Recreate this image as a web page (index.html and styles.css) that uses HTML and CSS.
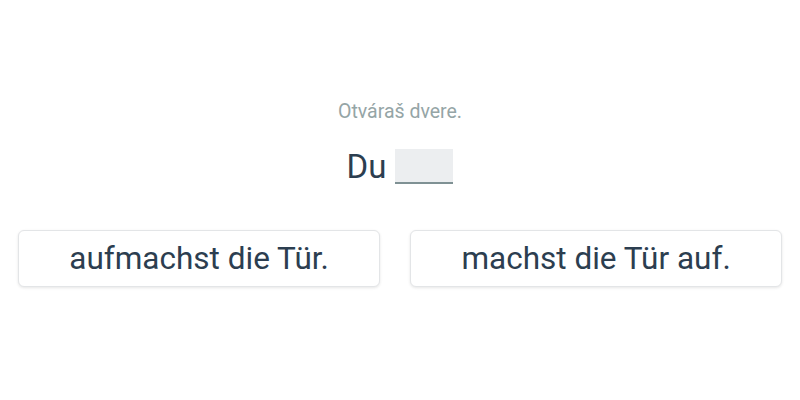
FILE: index.html
```html
<!DOCTYPE html>
<html>
<head>
<meta charset="utf-8">
<link rel="stylesheet" href="styles.css">
</head>
<body>
<div class="page">
  <div class="hint">Otváraš dvere.</div>
  <div class="sentence"><span class="word">Du</span><span class="blank"></span></div>
  <div class="options">
    <button class="option">aufmachst die Tür.</button>
    <button class="option">machst die Tür auf.</button>
  </div>
</div>
</body>
</html>
```
FILE: styles.css
```css
html, body {
  margin: 0;
  padding: 0;
  background: #ffffff;
  font-family: Roboto, "Liberation Sans", sans-serif;
}
.page {
  width: 800px;
  height: 400px;
  box-sizing: border-box;
  padding: 99px 18px 0;
  display: flex;
  flex-direction: column;
  align-items: stretch;
}
.hint {
  text-align: center;
  font-size: 19.5px;
  line-height: 26px;
  color: #95a5a6;
}
.sentence {
  margin-top: 22px;
  display: flex;
  justify-content: center;
  align-items: flex-end;
  gap: 9px;
  height: 40px;
}
.word {
  font-size: 33px;
  line-height: 40px;
  color: #2c3e50;
}
.blank {
  width: 58px;
  height: 33px;
  margin-bottom: 3px;
  background: #eceef0;
  border-bottom: 2px solid #7f9194;
}
.options {
  margin-top: 43px;
  display: flex;
  gap: 30px;
}
.option {
  flex: 1 1 auto;
  height: 57px;
  padding: 0 20px;
  background: #ffffff;
  border: 1px solid #e3e5e7;
  border-radius: 6px;
  box-shadow: 0 1px 3px rgba(0,0,0,0.10);
  font-family: Roboto, "Liberation Sans", sans-serif;
  font-size: 31.5px;
  color: #2c3e50;
  cursor: pointer;
}
```
